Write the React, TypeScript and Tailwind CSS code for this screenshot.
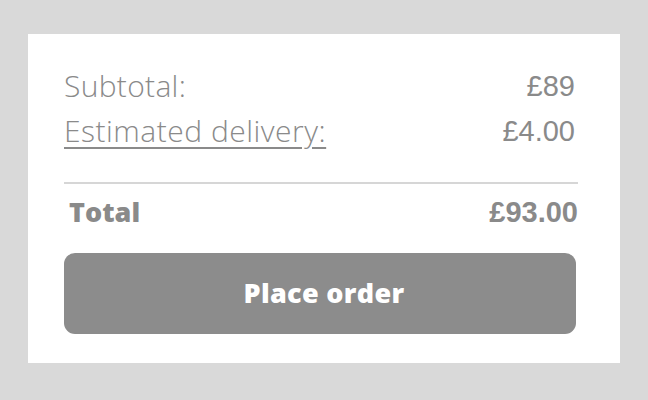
export default function App() {
  return (
    <div className="w-[648px] h-[400px] bg-[#d9d9d9] pt-[34px] pl-[28px]">
      <div className="w-[592px] h-[329px] bg-white pl-[36px] pr-[42px] pt-[34px]">
        {/* Subtotal */}
        <div className="flex items-center justify-between h-[36px] text-[#8a8a8a]">
          <span className="font-['Open_Sans',sans-serif] font-light text-[30px] tracking-[0.3px] leading-[36px]">Subtotal:</span>
          <span className="font-['Liberation_Sans',Arial,sans-serif] text-[29px] leading-[36px] pr-[3px]">£89</span>
        </div>
        {/* Delivery */}
        <div className="flex items-center justify-between h-[36px] mt-[9px] text-[#8a8a8a]">
          <span className="font-['Open_Sans',sans-serif] font-light text-[30px] tracking-[0.5px] leading-[36px] underline underline-offset-[5px] decoration-[2px]">
            Estimated delivery:
          </span>
          <span className="font-['Liberation_Sans',Arial,sans-serif] text-[29px] leading-[36px] pr-[3px]">£4.00</span>
        </div>
        <div className="mt-[33px] h-[2px] bg-[#d6d6d6]" />
        {/* Total */}
        <div className="flex items-center justify-between h-[36px] mt-[10px] text-[#8a8a8a]">
          <span className="font-['Open_Sans',sans-serif] font-extrabold text-[27px] leading-[36px] pl-[5px]">Total</span>
          <span className="font-['Liberation_Sans',Arial,sans-serif] font-bold text-[29px] leading-[36px]">£93.00</span>
        </div>
        <button className="mt-[23px] w-[512px] h-[81px] rounded-[11px] bg-[#8c8c8c] text-white font-['Open_Sans',sans-serif] font-extrabold text-[27px] tracking-[0.3px] pl-[8px]">
          Place order
        </button>
      </div>
    </div>
  );
}
